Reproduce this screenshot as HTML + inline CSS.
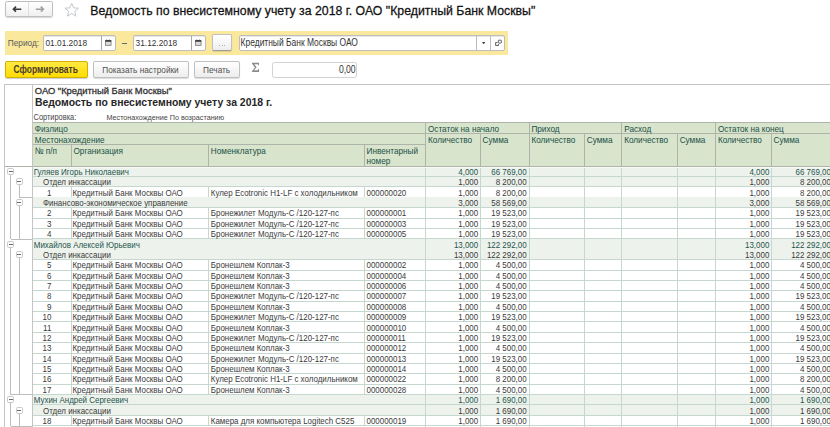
<!DOCTYPE html>
<html><head><meta charset="utf-8"><style>
html,body{margin:0;padding:0;background:#fff;}
body{width:830px;height:427px;overflow:hidden;position:relative;font-family:"Liberation Sans", sans-serif;}
.t{position:absolute;white-space:nowrap;}
.r{position:absolute;}
</style></head><body>
<div class="r" style="left:4.60px;top:1.10px;width:48.00px;height:16.00px;border:1px solid #bfbfbf;border-radius:2.2px;background:linear-gradient(#fff,#f0f0f0);box-shadow:0 1px 1px rgba(0,0,0,0.16);box-sizing:border-box"></div>
<div class="r" style="left:28.20px;top:2.10px;width:1.00px;height:14.00px;background:#dedede"></div>
<svg class="r" style="left:0;top:0" width="60" height="20" viewBox="0 0 60 20"><path d="M12.3 9.2 L15.4 6.1 L16.6 7.3 L15.3 8.4 H21.3 V10.0 H15.3 L16.6 11.1 L15.4 12.3 Z" fill="#3a3a3a"/><path d="M44.5 9.2 L41.4 6.1 L40.2 7.3 L41.5 8.4 H35.8 V10.0 H41.5 L40.2 11.1 L41.4 12.3 Z" fill="#a0a0a0"/></svg>
<svg class="r" style="left:0;top:0" width="90" height="20"><polygon points="71.70,3.30 73.58,7.81 78.45,8.21 74.74,11.39 75.87,16.14 71.70,13.60 67.53,16.14 68.66,11.39 64.95,8.21 69.82,7.81" fill="none" stroke="#c3c7cb" stroke-width="1" stroke-linejoin="round"/></svg>
<div class="t" style="left:90.30px;top:4.59px;font-size:12.3px;line-height:12.3px;color:#111;font-weight:normal;-webkit-text-stroke:0.25px #111;transform:scaleY(1.02);transform-origin:0 10.412px;">Ведомость по внесистемному учету за 2018 г. ОАО "Кредитный Банк Москвы"</div>
<div class="r" style="left:4.50px;top:31.10px;width:503.50px;height:23.60px;background:#fae99c"></div>
<div class="t" style="left:7.70px;top:38.97px;font-size:8.3px;line-height:8.3px;color:#5c5c5c;font-weight:normal;transform:scaleY(1.2);transform-origin:0 7.026px;">Период:</div>
<div class="r" style="left:43.30px;top:35.30px;width:72.40px;height:15.70px;background:#fff;border:1px solid #bdbdbd;border-radius:2px;box-sizing:border-box;box-shadow:inset 0 1px 0 #e8e8e8"></div>
<div class="r" style="left:101.00px;top:35.80px;width:1.00px;height:14.70px;background:#a8a8a8"></div>
<div class="t" style="left:45.50px;top:38.87px;font-size:8.3px;line-height:8.3px;color:#333;font-weight:normal;transform:scaleY(1.2);transform-origin:0 7.026px;">01.01.2018</div>
<svg class="r" style="left:104.9px;top:39.3px" width="7" height="7" viewBox="0 0 7 7"><rect x="0.55" y="2.2" width="5.5" height="4.1" fill="#dadada" stroke="#666" stroke-width="0.7"/><rect x="0.2" y="1.0" width="6.1" height="1.6" fill="#3c3c3c"/><rect x="1.4" y="0.2" width="0.8" height="1" fill="#888"/><rect x="4.3" y="0.2" width="0.8" height="1" fill="#888"/></svg>
<div class="r" style="left:122.20px;top:43.35px;width:4.80px;height:0.90px;background:#6a6a6a"></div>
<div class="r" style="left:133.40px;top:35.30px;width:72.30px;height:15.70px;background:#fff;border:1px solid #bdbdbd;border-radius:2px;box-sizing:border-box;box-shadow:inset 0 1px 0 #e8e8e8"></div>
<div class="r" style="left:191.20px;top:35.80px;width:1.00px;height:14.70px;background:#a8a8a8"></div>
<div class="t" style="left:135.60px;top:38.87px;font-size:8.3px;line-height:8.3px;color:#333;font-weight:normal;transform:scaleY(1.2);transform-origin:0 7.026px;">31.12.2018</div>
<svg class="r" style="left:195.0px;top:39.3px" width="7" height="7" viewBox="0 0 7 7"><rect x="0.55" y="2.2" width="5.5" height="4.1" fill="#dadada" stroke="#666" stroke-width="0.7"/><rect x="0.2" y="1.0" width="6.1" height="1.6" fill="#3c3c3c"/><rect x="1.4" y="0.2" width="0.8" height="1" fill="#888"/><rect x="4.3" y="0.2" width="0.8" height="1" fill="#888"/></svg>
<div class="r" style="left:212.40px;top:34.40px;width:19.70px;height:17.00px;background:linear-gradient(#fff,#eeeeee);border:1px solid #c0c0c0;border-bottom-color:#9c9c9c;border-radius:2px;box-sizing:border-box;box-shadow:0 1px 1px rgba(0,0,0,0.12)"></div>
<div class="r" style="left:219.40px;top:45.00px;width:0.80px;height:0.80px;background:#b0b0b0"></div>
<div class="r" style="left:221.50px;top:45.00px;width:0.80px;height:0.80px;background:#b0b0b0"></div>
<div class="r" style="left:223.60px;top:45.00px;width:0.80px;height:0.80px;background:#b0b0b0"></div>
<div class="r" style="left:238.50px;top:35.30px;width:266.30px;height:15.70px;background:#fff;border:1px solid #bdbdbd;border-radius:2px;box-sizing:border-box;box-shadow:inset 0 1px 0 #e8e8e8"></div>
<div class="r" style="left:476.30px;top:35.80px;width:1.00px;height:14.70px;background:#bdbdbd"></div>
<div class="r" style="left:490.00px;top:35.80px;width:1.00px;height:14.70px;background:#bdbdbd"></div>
<div class="t" style="left:240.60px;top:38.75px;font-size:8.45px;line-height:8.45px;color:#333;font-weight:normal;transform:scaleY(1.2);transform-origin:0 7.153px;">Кредитный Банк Москвы ОАО</div>
<svg class="r" style="left:481.9px;top:41.8px" width="4" height="3" viewBox="0 0 4 3"><path d="M0 0 L3.4 0 L1.7 2.2 Z" fill="#3a3a3a"/></svg>
<svg class="r" style="left:494.6px;top:39.2px" width="7" height="7" viewBox="0 0 7 7"><rect x="3.3" y="1.2" width="3.0" height="2.9" rx="0.5" fill="none" stroke="#444" stroke-width="0.85"/><path d="M2.4 3.6 H0.6 V6.5 H3.4 V5.0" fill="none" stroke="#444" stroke-width="0.85"/></svg>
<div class="r" style="left:4.80px;top:61.00px;width:82.90px;height:16.80px;background:linear-gradient(#ffea45,#ffdc00);border:1px solid #d2b000;border-radius:2px;box-sizing:border-box;box-shadow:0 1px 1px rgba(0,0,0,0.2)"></div>
<div class="t" style="left:13.60px;top:65.85px;font-size:8.45px;line-height:8.45px;color:#4a3c2c;font-weight:bold;transform:scaleY(1.2);transform-origin:0 7.153px;">Сформировать</div>
<div class="r" style="left:93.30px;top:61.10px;width:95.50px;height:16.70px;background:linear-gradient(#fff,#ededed);border:1px solid #c0c0c0;border-radius:2px;box-sizing:border-box;box-shadow:0 1px 1px rgba(0,0,0,0.15)"></div>
<div class="t" style="left:102.30px;top:67.02px;font-size:8.25px;line-height:8.25px;color:#505050;font-weight:normal;transform:scaleY(1.2);transform-origin:0 6.984px;">Показать настройки</div>
<div class="r" style="left:194.00px;top:61.10px;width:45.90px;height:16.70px;background:linear-gradient(#fff,#ededed);border:1px solid #c0c0c0;border-radius:2px;box-sizing:border-box;box-shadow:0 1px 1px rgba(0,0,0,0.15)"></div>
<div class="t" style="left:203.10px;top:67.02px;font-size:8.25px;line-height:8.25px;color:#505050;font-weight:normal;transform:scaleY(1.2);transform-origin:0 6.984px;">Печать</div>
<svg class="r" style="left:251px;top:62px" width="10" height="11" viewBox="0 0 10 11"><path d="M0.9 0.8 H8.05 V3.2 H7.3 L6.9 2.3 H3.3 L5.6 5.3 L3.0 8.3 H6.9 L7.3 7.0 H8.05 V10.0 H0.9 V9.2 L3.9 5.4 L0.9 1.6 Z" fill="#8c8c8c"/></svg>
<div class="r" style="left:272.40px;top:61.60px;width:84.30px;height:16.00px;background:#fff;border:1px solid #d2d2d2;border-radius:2.5px;box-sizing:border-box"></div>
<div class="t" style="right:474.40px;top:65.92px;font-size:8.6px;line-height:8.6px;color:#333;font-weight:normal;transform:scaleY(1.2);transform-origin:0 7.280px;">0,00</div>
<div class="r" style="left:4.80px;top:83.90px;width:825.20px;height:1.00px;background:#c4c4c4"></div>
<div class="r" style="left:4.30px;top:84.40px;width:1.00px;height:342.60px;background:#c4c4c4"></div>
<div class="r" style="left:31.50px;top:84.40px;width:1.00px;height:342.60px;background:#c4c4c4"></div>
<div class="t" style="left:34.80px;top:86.34px;font-size:9.4px;line-height:9.4px;color:#333;font-weight:normal;-webkit-text-stroke:0.3px #333;transform:scaleY(1.04);transform-origin:0 7.957px;">ОАО "Кредитный Банк Москвы"</div>
<div class="t" style="left:34.90px;top:98.05px;font-size:10.45px;line-height:10.45px;color:#262626;font-weight:bold;">Ведомость по внесистемному учету за 2018 г.</div>
<div class="t" style="left:33.60px;top:113.74px;font-size:7.4px;line-height:7.4px;color:#464646;font-weight:normal;transform:scaleY(1.12);transform-origin:0 6.264px;">Сортировка:</div>
<div class="t" style="left:106.50px;top:113.91px;font-size:7.2px;line-height:7.2px;color:#464646;font-weight:normal;transform:scaleY(1.12);transform-origin:0 6.095px;">Местонахождение По возрастанию</div>
<div class="r" style="left:32.00px;top:122.90px;width:798.00px;height:43.30px;background:#d8e4cb"></div>
<div class="r" style="left:32.00px;top:122.40px;width:798.00px;height:1.00px;background:#afb4ab"></div>
<div class="r" style="left:32.00px;top:133.30px;width:798.00px;height:1.00px;background:#afb4ab"></div>
<div class="r" style="left:32.00px;top:144.30px;width:393.60px;height:1.00px;background:#afb4ab"></div>
<div class="r" style="left:32.00px;top:165.70px;width:798.00px;height:1.00px;background:#afb4ab"></div>
<div class="r" style="left:70.50px;top:144.80px;width:1.00px;height:21.40px;background:#afb4ab"></div>
<div class="r" style="left:208.00px;top:144.80px;width:1.00px;height:21.40px;background:#afb4ab"></div>
<div class="r" style="left:363.60px;top:144.80px;width:1.00px;height:21.40px;background:#afb4ab"></div>
<div class="r" style="left:425.10px;top:122.90px;width:1.00px;height:43.30px;background:#afb4ab"></div>
<div class="r" style="left:479.90px;top:133.80px;width:1.00px;height:32.40px;background:#afb4ab"></div>
<div class="r" style="left:584.10px;top:133.80px;width:1.00px;height:32.40px;background:#afb4ab"></div>
<div class="r" style="left:677.00px;top:133.80px;width:1.00px;height:32.40px;background:#afb4ab"></div>
<div class="r" style="left:770.90px;top:133.80px;width:1.00px;height:32.40px;background:#afb4ab"></div>
<div class="r" style="left:528.50px;top:122.90px;width:1.00px;height:43.30px;background:#afb4ab"></div>
<div class="r" style="left:621.30px;top:122.90px;width:1.00px;height:43.30px;background:#afb4ab"></div>
<div class="r" style="left:715.00px;top:122.90px;width:1.00px;height:43.30px;background:#afb4ab"></div>
<div class="t" style="left:34.80px;top:126.26px;font-size:8.2px;line-height:8.2px;color:#1b5049;font-weight:normal;transform:scaleY(1.15);transform-origin:0 6.941px;">Физлицо</div>
<div class="t" style="left:34.80px;top:136.96px;font-size:8.2px;line-height:8.2px;color:#1b5049;font-weight:normal;transform:scaleY(1.15);transform-origin:0 6.941px;">Местонахождение</div>
<div class="t" style="left:34.80px;top:147.96px;font-size:8.2px;line-height:8.2px;color:#1b5049;font-weight:normal;transform:scaleY(1.15);transform-origin:0 6.941px;">№ п/п</div>
<div class="t" style="left:73.50px;top:147.96px;font-size:8.2px;line-height:8.2px;color:#1b5049;font-weight:normal;transform:scaleY(1.15);transform-origin:0 6.941px;">Организация</div>
<div class="t" style="left:210.80px;top:147.96px;font-size:8.2px;line-height:8.2px;color:#1b5049;font-weight:normal;transform:scaleY(1.15);transform-origin:0 6.941px;">Номенклатура</div>
<div class="t" style="left:366.50px;top:147.96px;font-size:8.2px;line-height:8.2px;color:#1b5049;font-weight:normal;transform:scaleY(1.15);transform-origin:0 6.941px;">Инвентарный</div>
<div class="t" style="left:366.50px;top:157.56px;font-size:8.2px;line-height:8.2px;color:#1b5049;font-weight:normal;transform:scaleY(1.15);transform-origin:0 6.941px;">номер</div>
<div class="t" style="left:428.00px;top:126.26px;font-size:8.2px;line-height:8.2px;color:#1b5049;font-weight:normal;transform:scaleY(1.15);transform-origin:0 6.941px;">Остаток на начало</div>
<div class="t" style="left:531.40px;top:126.26px;font-size:8.2px;line-height:8.2px;color:#1b5049;font-weight:normal;transform:scaleY(1.15);transform-origin:0 6.941px;">Приход</div>
<div class="t" style="left:624.20px;top:126.26px;font-size:8.2px;line-height:8.2px;color:#1b5049;font-weight:normal;transform:scaleY(1.15);transform-origin:0 6.941px;">Расход</div>
<div class="t" style="left:717.90px;top:126.26px;font-size:8.2px;line-height:8.2px;color:#1b5049;font-weight:normal;transform:scaleY(1.15);transform-origin:0 6.941px;">Остаток на конец</div>
<div class="t" style="left:428.00px;top:136.96px;font-size:8.2px;line-height:8.2px;color:#1b5049;font-weight:normal;transform:scaleY(1.15);transform-origin:0 6.941px;">Количество</div>
<div class="t" style="left:531.40px;top:136.96px;font-size:8.2px;line-height:8.2px;color:#1b5049;font-weight:normal;transform:scaleY(1.15);transform-origin:0 6.941px;">Количество</div>
<div class="t" style="left:624.20px;top:136.96px;font-size:8.2px;line-height:8.2px;color:#1b5049;font-weight:normal;transform:scaleY(1.15);transform-origin:0 6.941px;">Количество</div>
<div class="t" style="left:717.90px;top:136.96px;font-size:8.2px;line-height:8.2px;color:#1b5049;font-weight:normal;transform:scaleY(1.15);transform-origin:0 6.941px;">Количество</div>
<div class="t" style="left:482.60px;top:136.96px;font-size:8.2px;line-height:8.2px;color:#1b5049;font-weight:normal;transform:scaleY(1.15);transform-origin:0 6.941px;">Сумма</div>
<div class="t" style="left:586.80px;top:136.96px;font-size:8.2px;line-height:8.2px;color:#1b5049;font-weight:normal;transform:scaleY(1.15);transform-origin:0 6.941px;">Сумма</div>
<div class="t" style="left:679.70px;top:136.96px;font-size:8.2px;line-height:8.2px;color:#1b5049;font-weight:normal;transform:scaleY(1.15);transform-origin:0 6.941px;">Сумма</div>
<div class="t" style="left:773.60px;top:136.96px;font-size:8.2px;line-height:8.2px;color:#1b5049;font-weight:normal;transform:scaleY(1.15);transform-origin:0 6.941px;">Сумма</div>
<div class="r" style="left:32.00px;top:166.20px;width:798.00px;height:10.38px;background:#eef2ec"></div>
<div class="r" style="left:32.00px;top:176.08px;width:798.00px;height:1.00px;background:#c6d7cf"></div>
<div class="r" style="left:32.00px;top:176.58px;width:798.00px;height:10.38px;background:#eef2ec"></div>
<div class="r" style="left:32.00px;top:186.46px;width:798.00px;height:1.00px;background:#c6d7cf"></div>
<div class="r" style="left:32.00px;top:196.84px;width:798.00px;height:1.00px;background:#c6d7cf"></div>
<div class="r" style="left:70.50px;top:186.96px;width:1.00px;height:10.38px;background:#c6d7cf"></div>
<div class="r" style="left:208.00px;top:186.96px;width:1.00px;height:10.38px;background:#c6d7cf"></div>
<div class="r" style="left:363.60px;top:186.96px;width:1.00px;height:10.38px;background:#c6d7cf"></div>
<div class="r" style="left:32.00px;top:197.34px;width:798.00px;height:10.38px;background:#eef2ec"></div>
<div class="r" style="left:32.00px;top:207.22px;width:798.00px;height:1.00px;background:#c6d7cf"></div>
<div class="r" style="left:32.00px;top:217.60px;width:798.00px;height:1.00px;background:#c6d7cf"></div>
<div class="r" style="left:70.50px;top:207.72px;width:1.00px;height:10.38px;background:#c6d7cf"></div>
<div class="r" style="left:208.00px;top:207.72px;width:1.00px;height:10.38px;background:#c6d7cf"></div>
<div class="r" style="left:363.60px;top:207.72px;width:1.00px;height:10.38px;background:#c6d7cf"></div>
<div class="r" style="left:32.00px;top:227.98px;width:798.00px;height:1.00px;background:#c6d7cf"></div>
<div class="r" style="left:70.50px;top:218.10px;width:1.00px;height:10.38px;background:#c6d7cf"></div>
<div class="r" style="left:208.00px;top:218.10px;width:1.00px;height:10.38px;background:#c6d7cf"></div>
<div class="r" style="left:363.60px;top:218.10px;width:1.00px;height:10.38px;background:#c6d7cf"></div>
<div class="r" style="left:32.00px;top:238.36px;width:798.00px;height:1.00px;background:#c6d7cf"></div>
<div class="r" style="left:70.50px;top:228.48px;width:1.00px;height:10.38px;background:#c6d7cf"></div>
<div class="r" style="left:208.00px;top:228.48px;width:1.00px;height:10.38px;background:#c6d7cf"></div>
<div class="r" style="left:363.60px;top:228.48px;width:1.00px;height:10.38px;background:#c6d7cf"></div>
<div class="r" style="left:32.00px;top:238.86px;width:798.00px;height:10.38px;background:#eef2ec"></div>
<div class="r" style="left:32.00px;top:248.74px;width:798.00px;height:1.00px;background:#c6d7cf"></div>
<div class="r" style="left:32.00px;top:249.24px;width:798.00px;height:10.38px;background:#eef2ec"></div>
<div class="r" style="left:32.00px;top:259.12px;width:798.00px;height:1.00px;background:#c6d7cf"></div>
<div class="r" style="left:32.00px;top:269.50px;width:798.00px;height:1.00px;background:#c6d7cf"></div>
<div class="r" style="left:70.50px;top:259.62px;width:1.00px;height:10.38px;background:#c6d7cf"></div>
<div class="r" style="left:208.00px;top:259.62px;width:1.00px;height:10.38px;background:#c6d7cf"></div>
<div class="r" style="left:363.60px;top:259.62px;width:1.00px;height:10.38px;background:#c6d7cf"></div>
<div class="r" style="left:32.00px;top:279.88px;width:798.00px;height:1.00px;background:#c6d7cf"></div>
<div class="r" style="left:70.50px;top:270.00px;width:1.00px;height:10.38px;background:#c6d7cf"></div>
<div class="r" style="left:208.00px;top:270.00px;width:1.00px;height:10.38px;background:#c6d7cf"></div>
<div class="r" style="left:363.60px;top:270.00px;width:1.00px;height:10.38px;background:#c6d7cf"></div>
<div class="r" style="left:32.00px;top:290.26px;width:798.00px;height:1.00px;background:#c6d7cf"></div>
<div class="r" style="left:70.50px;top:280.38px;width:1.00px;height:10.38px;background:#c6d7cf"></div>
<div class="r" style="left:208.00px;top:280.38px;width:1.00px;height:10.38px;background:#c6d7cf"></div>
<div class="r" style="left:363.60px;top:280.38px;width:1.00px;height:10.38px;background:#c6d7cf"></div>
<div class="r" style="left:32.00px;top:300.64px;width:798.00px;height:1.00px;background:#c6d7cf"></div>
<div class="r" style="left:70.50px;top:290.76px;width:1.00px;height:10.38px;background:#c6d7cf"></div>
<div class="r" style="left:208.00px;top:290.76px;width:1.00px;height:10.38px;background:#c6d7cf"></div>
<div class="r" style="left:363.60px;top:290.76px;width:1.00px;height:10.38px;background:#c6d7cf"></div>
<div class="r" style="left:32.00px;top:311.02px;width:798.00px;height:1.00px;background:#c6d7cf"></div>
<div class="r" style="left:70.50px;top:301.14px;width:1.00px;height:10.38px;background:#c6d7cf"></div>
<div class="r" style="left:208.00px;top:301.14px;width:1.00px;height:10.38px;background:#c6d7cf"></div>
<div class="r" style="left:363.60px;top:301.14px;width:1.00px;height:10.38px;background:#c6d7cf"></div>
<div class="r" style="left:32.00px;top:321.40px;width:798.00px;height:1.00px;background:#c6d7cf"></div>
<div class="r" style="left:70.50px;top:311.52px;width:1.00px;height:10.38px;background:#c6d7cf"></div>
<div class="r" style="left:208.00px;top:311.52px;width:1.00px;height:10.38px;background:#c6d7cf"></div>
<div class="r" style="left:363.60px;top:311.52px;width:1.00px;height:10.38px;background:#c6d7cf"></div>
<div class="r" style="left:32.00px;top:331.78px;width:798.00px;height:1.00px;background:#c6d7cf"></div>
<div class="r" style="left:70.50px;top:321.90px;width:1.00px;height:10.38px;background:#c6d7cf"></div>
<div class="r" style="left:208.00px;top:321.90px;width:1.00px;height:10.38px;background:#c6d7cf"></div>
<div class="r" style="left:363.60px;top:321.90px;width:1.00px;height:10.38px;background:#c6d7cf"></div>
<div class="r" style="left:32.00px;top:342.16px;width:798.00px;height:1.00px;background:#c6d7cf"></div>
<div class="r" style="left:70.50px;top:332.28px;width:1.00px;height:10.38px;background:#c6d7cf"></div>
<div class="r" style="left:208.00px;top:332.28px;width:1.00px;height:10.38px;background:#c6d7cf"></div>
<div class="r" style="left:363.60px;top:332.28px;width:1.00px;height:10.38px;background:#c6d7cf"></div>
<div class="r" style="left:32.00px;top:352.54px;width:798.00px;height:1.00px;background:#c6d7cf"></div>
<div class="r" style="left:70.50px;top:342.66px;width:1.00px;height:10.38px;background:#c6d7cf"></div>
<div class="r" style="left:208.00px;top:342.66px;width:1.00px;height:10.38px;background:#c6d7cf"></div>
<div class="r" style="left:363.60px;top:342.66px;width:1.00px;height:10.38px;background:#c6d7cf"></div>
<div class="r" style="left:32.00px;top:362.92px;width:798.00px;height:1.00px;background:#c6d7cf"></div>
<div class="r" style="left:70.50px;top:353.04px;width:1.00px;height:10.38px;background:#c6d7cf"></div>
<div class="r" style="left:208.00px;top:353.04px;width:1.00px;height:10.38px;background:#c6d7cf"></div>
<div class="r" style="left:363.60px;top:353.04px;width:1.00px;height:10.38px;background:#c6d7cf"></div>
<div class="r" style="left:32.00px;top:373.30px;width:798.00px;height:1.00px;background:#c6d7cf"></div>
<div class="r" style="left:70.50px;top:363.42px;width:1.00px;height:10.38px;background:#c6d7cf"></div>
<div class="r" style="left:208.00px;top:363.42px;width:1.00px;height:10.38px;background:#c6d7cf"></div>
<div class="r" style="left:363.60px;top:363.42px;width:1.00px;height:10.38px;background:#c6d7cf"></div>
<div class="r" style="left:32.00px;top:383.68px;width:798.00px;height:1.00px;background:#c6d7cf"></div>
<div class="r" style="left:70.50px;top:373.80px;width:1.00px;height:10.38px;background:#c6d7cf"></div>
<div class="r" style="left:208.00px;top:373.80px;width:1.00px;height:10.38px;background:#c6d7cf"></div>
<div class="r" style="left:363.60px;top:373.80px;width:1.00px;height:10.38px;background:#c6d7cf"></div>
<div class="r" style="left:32.00px;top:394.06px;width:798.00px;height:1.00px;background:#c6d7cf"></div>
<div class="r" style="left:70.50px;top:384.18px;width:1.00px;height:10.38px;background:#c6d7cf"></div>
<div class="r" style="left:208.00px;top:384.18px;width:1.00px;height:10.38px;background:#c6d7cf"></div>
<div class="r" style="left:363.60px;top:384.18px;width:1.00px;height:10.38px;background:#c6d7cf"></div>
<div class="r" style="left:32.00px;top:394.56px;width:798.00px;height:10.38px;background:#eef2ec"></div>
<div class="r" style="left:32.00px;top:404.44px;width:798.00px;height:1.00px;background:#c6d7cf"></div>
<div class="r" style="left:32.00px;top:404.94px;width:798.00px;height:10.38px;background:#eef2ec"></div>
<div class="r" style="left:32.00px;top:414.82px;width:798.00px;height:1.00px;background:#c6d7cf"></div>
<div class="r" style="left:32.00px;top:425.20px;width:798.00px;height:1.00px;background:#c6d7cf"></div>
<div class="r" style="left:70.50px;top:415.32px;width:1.00px;height:10.38px;background:#c6d7cf"></div>
<div class="r" style="left:208.00px;top:415.32px;width:1.00px;height:10.38px;background:#c6d7cf"></div>
<div class="r" style="left:363.60px;top:415.32px;width:1.00px;height:10.38px;background:#c6d7cf"></div>
<div class="r" style="left:425.10px;top:166.20px;width:1.00px;height:260.80px;background:#c6d7cf"></div>
<div class="r" style="left:479.90px;top:166.20px;width:1.00px;height:260.80px;background:#c6d7cf"></div>
<div class="r" style="left:528.50px;top:166.20px;width:1.00px;height:260.80px;background:#c6d7cf"></div>
<div class="r" style="left:584.10px;top:166.20px;width:1.00px;height:260.80px;background:#c6d7cf"></div>
<div class="r" style="left:621.30px;top:166.20px;width:1.00px;height:260.80px;background:#c6d7cf"></div>
<div class="r" style="left:677.00px;top:166.20px;width:1.00px;height:260.80px;background:#c6d7cf"></div>
<div class="r" style="left:715.00px;top:166.20px;width:1.00px;height:260.80px;background:#c6d7cf"></div>
<div class="r" style="left:770.90px;top:166.20px;width:1.00px;height:260.80px;background:#c6d7cf"></div>
<div class="r" style="left:32.00px;top:166.60px;width:798.00px;height:1.00px;background:#f6f9f5"></div>
<div class="r" style="left:32.00px;top:165.70px;width:798.00px;height:1.00px;background:#afb4ab"></div>
<div class="t" style="left:33.80px;top:168.87px;font-size:7.95px;line-height:7.95px;color:#1d554c;font-weight:normal;transform:scaleY(1.25);transform-origin:0 6.730px;">Гуляев Игорь Николаевич</div>
<div class="t" style="right:351.80px;top:168.87px;font-size:7.95px;line-height:7.95px;color:#1d554c;font-weight:normal;transform:scaleY(1.25);transform-origin:0 6.730px;">4,000</div>
<div class="t" style="right:303.40px;top:168.87px;font-size:7.95px;line-height:7.95px;color:#1d554c;font-weight:normal;transform:scaleY(1.25);transform-origin:0 6.730px;">66 769,00</div>
<div class="t" style="right:60.70px;top:168.87px;font-size:7.95px;line-height:7.95px;color:#1d554c;font-weight:normal;transform:scaleY(1.25);transform-origin:0 6.730px;">4,000</div>
<div class="t" style="right:-0.90px;top:168.87px;font-size:7.95px;line-height:7.95px;color:#1d554c;font-weight:normal;transform:scaleY(1.25);transform-origin:0 6.730px;">66 769,00</div>
<div class="t" style="left:43.00px;top:179.25px;font-size:7.95px;line-height:7.95px;color:#3a3a3a;font-weight:normal;transform:scaleY(1.25);transform-origin:0 6.730px;">Отдел инкассации</div>
<div class="t" style="right:351.80px;top:179.25px;font-size:7.95px;line-height:7.95px;color:#3a3a3a;font-weight:normal;transform:scaleY(1.25);transform-origin:0 6.730px;">1,000</div>
<div class="t" style="right:303.40px;top:179.25px;font-size:7.95px;line-height:7.95px;color:#3a3a3a;font-weight:normal;transform:scaleY(1.25);transform-origin:0 6.730px;">8 200,00</div>
<div class="t" style="right:60.70px;top:179.25px;font-size:7.95px;line-height:7.95px;color:#3a3a3a;font-weight:normal;transform:scaleY(1.25);transform-origin:0 6.730px;">1,000</div>
<div class="t" style="right:-0.90px;top:179.25px;font-size:7.95px;line-height:7.95px;color:#3a3a3a;font-weight:normal;transform:scaleY(1.25);transform-origin:0 6.730px;">8 200,00</div>
<div class="t" style="right:778.70px;top:189.63px;font-size:7.95px;line-height:7.95px;color:#3a3a3a;font-weight:normal;transform:scaleY(1.25);transform-origin:0 6.730px;">1</div>
<div class="t" style="left:72.40px;top:189.63px;font-size:7.95px;line-height:7.95px;color:#3a3a3a;font-weight:normal;transform:scaleY(1.25);transform-origin:0 6.730px;">Кредитный Банк Москвы ОАО</div>
<div class="t" style="left:210.80px;top:189.63px;font-size:7.95px;line-height:7.95px;color:#3a3a3a;font-weight:normal;transform:scaleY(1.25);transform-origin:0 6.730px;">Кулер Ecotronic H1-LF с холодильником</div>
<div class="t" style="left:366.50px;top:189.63px;font-size:7.95px;line-height:7.95px;color:#3a3a3a;font-weight:normal;transform:scaleY(1.25);transform-origin:0 6.730px;">000000020</div>
<div class="t" style="right:351.80px;top:189.63px;font-size:7.95px;line-height:7.95px;color:#3a3a3a;font-weight:normal;transform:scaleY(1.25);transform-origin:0 6.730px;">1,000</div>
<div class="t" style="right:303.40px;top:189.63px;font-size:7.95px;line-height:7.95px;color:#3a3a3a;font-weight:normal;transform:scaleY(1.25);transform-origin:0 6.730px;">8 200,00</div>
<div class="t" style="right:60.70px;top:189.63px;font-size:7.95px;line-height:7.95px;color:#3a3a3a;font-weight:normal;transform:scaleY(1.25);transform-origin:0 6.730px;">1,000</div>
<div class="t" style="right:-0.90px;top:189.63px;font-size:7.95px;line-height:7.95px;color:#3a3a3a;font-weight:normal;transform:scaleY(1.25);transform-origin:0 6.730px;">8 200,00</div>
<div class="t" style="left:43.00px;top:200.01px;font-size:7.95px;line-height:7.95px;color:#3a3a3a;font-weight:normal;transform:scaleY(1.25);transform-origin:0 6.730px;">Финансово-экономическое управление</div>
<div class="t" style="right:351.80px;top:200.01px;font-size:7.95px;line-height:7.95px;color:#3a3a3a;font-weight:normal;transform:scaleY(1.25);transform-origin:0 6.730px;">3,000</div>
<div class="t" style="right:303.40px;top:200.01px;font-size:7.95px;line-height:7.95px;color:#3a3a3a;font-weight:normal;transform:scaleY(1.25);transform-origin:0 6.730px;">58 569,00</div>
<div class="t" style="right:60.70px;top:200.01px;font-size:7.95px;line-height:7.95px;color:#3a3a3a;font-weight:normal;transform:scaleY(1.25);transform-origin:0 6.730px;">3,000</div>
<div class="t" style="right:-0.90px;top:200.01px;font-size:7.95px;line-height:7.95px;color:#3a3a3a;font-weight:normal;transform:scaleY(1.25);transform-origin:0 6.730px;">58 569,00</div>
<div class="t" style="right:778.70px;top:210.39px;font-size:7.95px;line-height:7.95px;color:#3a3a3a;font-weight:normal;transform:scaleY(1.25);transform-origin:0 6.730px;">2</div>
<div class="t" style="left:72.40px;top:210.39px;font-size:7.95px;line-height:7.95px;color:#3a3a3a;font-weight:normal;transform:scaleY(1.25);transform-origin:0 6.730px;">Кредитный Банк Москвы ОАО</div>
<div class="t" style="left:210.80px;top:210.39px;font-size:7.95px;line-height:7.95px;color:#3a3a3a;font-weight:normal;transform:scaleY(1.25);transform-origin:0 6.730px;">Бронежилет Модуль-С /120-127-пс</div>
<div class="t" style="left:366.50px;top:210.39px;font-size:7.95px;line-height:7.95px;color:#3a3a3a;font-weight:normal;transform:scaleY(1.25);transform-origin:0 6.730px;">000000001</div>
<div class="t" style="right:351.80px;top:210.39px;font-size:7.95px;line-height:7.95px;color:#3a3a3a;font-weight:normal;transform:scaleY(1.25);transform-origin:0 6.730px;">1,000</div>
<div class="t" style="right:303.40px;top:210.39px;font-size:7.95px;line-height:7.95px;color:#3a3a3a;font-weight:normal;transform:scaleY(1.25);transform-origin:0 6.730px;">19 523,00</div>
<div class="t" style="right:60.70px;top:210.39px;font-size:7.95px;line-height:7.95px;color:#3a3a3a;font-weight:normal;transform:scaleY(1.25);transform-origin:0 6.730px;">1,000</div>
<div class="t" style="right:-0.90px;top:210.39px;font-size:7.95px;line-height:7.95px;color:#3a3a3a;font-weight:normal;transform:scaleY(1.25);transform-origin:0 6.730px;">19 523,00</div>
<div class="t" style="right:778.70px;top:220.77px;font-size:7.95px;line-height:7.95px;color:#3a3a3a;font-weight:normal;transform:scaleY(1.25);transform-origin:0 6.730px;">3</div>
<div class="t" style="left:72.40px;top:220.77px;font-size:7.95px;line-height:7.95px;color:#3a3a3a;font-weight:normal;transform:scaleY(1.25);transform-origin:0 6.730px;">Кредитный Банк Москвы ОАО</div>
<div class="t" style="left:210.80px;top:220.77px;font-size:7.95px;line-height:7.95px;color:#3a3a3a;font-weight:normal;transform:scaleY(1.25);transform-origin:0 6.730px;">Бронежилет Модуль-С /120-127-пс</div>
<div class="t" style="left:366.50px;top:220.77px;font-size:7.95px;line-height:7.95px;color:#3a3a3a;font-weight:normal;transform:scaleY(1.25);transform-origin:0 6.730px;">000000003</div>
<div class="t" style="right:351.80px;top:220.77px;font-size:7.95px;line-height:7.95px;color:#3a3a3a;font-weight:normal;transform:scaleY(1.25);transform-origin:0 6.730px;">1,000</div>
<div class="t" style="right:303.40px;top:220.77px;font-size:7.95px;line-height:7.95px;color:#3a3a3a;font-weight:normal;transform:scaleY(1.25);transform-origin:0 6.730px;">19 523,00</div>
<div class="t" style="right:60.70px;top:220.77px;font-size:7.95px;line-height:7.95px;color:#3a3a3a;font-weight:normal;transform:scaleY(1.25);transform-origin:0 6.730px;">1,000</div>
<div class="t" style="right:-0.90px;top:220.77px;font-size:7.95px;line-height:7.95px;color:#3a3a3a;font-weight:normal;transform:scaleY(1.25);transform-origin:0 6.730px;">19 523,00</div>
<div class="t" style="right:778.70px;top:231.15px;font-size:7.95px;line-height:7.95px;color:#3a3a3a;font-weight:normal;transform:scaleY(1.25);transform-origin:0 6.730px;">4</div>
<div class="t" style="left:72.40px;top:231.15px;font-size:7.95px;line-height:7.95px;color:#3a3a3a;font-weight:normal;transform:scaleY(1.25);transform-origin:0 6.730px;">Кредитный Банк Москвы ОАО</div>
<div class="t" style="left:210.80px;top:231.15px;font-size:7.95px;line-height:7.95px;color:#3a3a3a;font-weight:normal;transform:scaleY(1.25);transform-origin:0 6.730px;">Бронежилет Модуль-С /120-127-пс</div>
<div class="t" style="left:366.50px;top:231.15px;font-size:7.95px;line-height:7.95px;color:#3a3a3a;font-weight:normal;transform:scaleY(1.25);transform-origin:0 6.730px;">000000005</div>
<div class="t" style="right:351.80px;top:231.15px;font-size:7.95px;line-height:7.95px;color:#3a3a3a;font-weight:normal;transform:scaleY(1.25);transform-origin:0 6.730px;">1,000</div>
<div class="t" style="right:303.40px;top:231.15px;font-size:7.95px;line-height:7.95px;color:#3a3a3a;font-weight:normal;transform:scaleY(1.25);transform-origin:0 6.730px;">19 523,00</div>
<div class="t" style="right:60.70px;top:231.15px;font-size:7.95px;line-height:7.95px;color:#3a3a3a;font-weight:normal;transform:scaleY(1.25);transform-origin:0 6.730px;">1,000</div>
<div class="t" style="right:-0.90px;top:231.15px;font-size:7.95px;line-height:7.95px;color:#3a3a3a;font-weight:normal;transform:scaleY(1.25);transform-origin:0 6.730px;">19 523,00</div>
<div class="t" style="left:33.80px;top:241.53px;font-size:7.95px;line-height:7.95px;color:#1d554c;font-weight:normal;transform:scaleY(1.25);transform-origin:0 6.730px;">Михайлов Алексей Юрьевич</div>
<div class="t" style="right:351.80px;top:241.53px;font-size:7.95px;line-height:7.95px;color:#1d554c;font-weight:normal;transform:scaleY(1.25);transform-origin:0 6.730px;">13,000</div>
<div class="t" style="right:303.40px;top:241.53px;font-size:7.95px;line-height:7.95px;color:#1d554c;font-weight:normal;transform:scaleY(1.25);transform-origin:0 6.730px;">122 292,00</div>
<div class="t" style="right:60.70px;top:241.53px;font-size:7.95px;line-height:7.95px;color:#1d554c;font-weight:normal;transform:scaleY(1.25);transform-origin:0 6.730px;">13,000</div>
<div class="t" style="right:-0.90px;top:241.53px;font-size:7.95px;line-height:7.95px;color:#1d554c;font-weight:normal;transform:scaleY(1.25);transform-origin:0 6.730px;">122 292,00</div>
<div class="t" style="left:43.00px;top:251.91px;font-size:7.95px;line-height:7.95px;color:#3a3a3a;font-weight:normal;transform:scaleY(1.25);transform-origin:0 6.730px;">Отдел инкассации</div>
<div class="t" style="right:351.80px;top:251.91px;font-size:7.95px;line-height:7.95px;color:#3a3a3a;font-weight:normal;transform:scaleY(1.25);transform-origin:0 6.730px;">13,000</div>
<div class="t" style="right:303.40px;top:251.91px;font-size:7.95px;line-height:7.95px;color:#3a3a3a;font-weight:normal;transform:scaleY(1.25);transform-origin:0 6.730px;">122 292,00</div>
<div class="t" style="right:60.70px;top:251.91px;font-size:7.95px;line-height:7.95px;color:#3a3a3a;font-weight:normal;transform:scaleY(1.25);transform-origin:0 6.730px;">13,000</div>
<div class="t" style="right:-0.90px;top:251.91px;font-size:7.95px;line-height:7.95px;color:#3a3a3a;font-weight:normal;transform:scaleY(1.25);transform-origin:0 6.730px;">122 292,00</div>
<div class="t" style="right:778.70px;top:262.29px;font-size:7.95px;line-height:7.95px;color:#3a3a3a;font-weight:normal;transform:scaleY(1.25);transform-origin:0 6.730px;">5</div>
<div class="t" style="left:72.40px;top:262.29px;font-size:7.95px;line-height:7.95px;color:#3a3a3a;font-weight:normal;transform:scaleY(1.25);transform-origin:0 6.730px;">Кредитный Банк Москвы ОАО</div>
<div class="t" style="left:210.80px;top:262.29px;font-size:7.95px;line-height:7.95px;color:#3a3a3a;font-weight:normal;transform:scaleY(1.25);transform-origin:0 6.730px;">Бронешлем Коплак-3</div>
<div class="t" style="left:366.50px;top:262.29px;font-size:7.95px;line-height:7.95px;color:#3a3a3a;font-weight:normal;transform:scaleY(1.25);transform-origin:0 6.730px;">000000002</div>
<div class="t" style="right:351.80px;top:262.29px;font-size:7.95px;line-height:7.95px;color:#3a3a3a;font-weight:normal;transform:scaleY(1.25);transform-origin:0 6.730px;">1,000</div>
<div class="t" style="right:303.40px;top:262.29px;font-size:7.95px;line-height:7.95px;color:#3a3a3a;font-weight:normal;transform:scaleY(1.25);transform-origin:0 6.730px;">4 500,00</div>
<div class="t" style="right:60.70px;top:262.29px;font-size:7.95px;line-height:7.95px;color:#3a3a3a;font-weight:normal;transform:scaleY(1.25);transform-origin:0 6.730px;">1,000</div>
<div class="t" style="right:-0.90px;top:262.29px;font-size:7.95px;line-height:7.95px;color:#3a3a3a;font-weight:normal;transform:scaleY(1.25);transform-origin:0 6.730px;">4 500,00</div>
<div class="t" style="right:778.70px;top:272.67px;font-size:7.95px;line-height:7.95px;color:#3a3a3a;font-weight:normal;transform:scaleY(1.25);transform-origin:0 6.730px;">6</div>
<div class="t" style="left:72.40px;top:272.67px;font-size:7.95px;line-height:7.95px;color:#3a3a3a;font-weight:normal;transform:scaleY(1.25);transform-origin:0 6.730px;">Кредитный Банк Москвы ОАО</div>
<div class="t" style="left:210.80px;top:272.67px;font-size:7.95px;line-height:7.95px;color:#3a3a3a;font-weight:normal;transform:scaleY(1.25);transform-origin:0 6.730px;">Бронешлем Коплак-3</div>
<div class="t" style="left:366.50px;top:272.67px;font-size:7.95px;line-height:7.95px;color:#3a3a3a;font-weight:normal;transform:scaleY(1.25);transform-origin:0 6.730px;">000000004</div>
<div class="t" style="right:351.80px;top:272.67px;font-size:7.95px;line-height:7.95px;color:#3a3a3a;font-weight:normal;transform:scaleY(1.25);transform-origin:0 6.730px;">1,000</div>
<div class="t" style="right:303.40px;top:272.67px;font-size:7.95px;line-height:7.95px;color:#3a3a3a;font-weight:normal;transform:scaleY(1.25);transform-origin:0 6.730px;">4 500,00</div>
<div class="t" style="right:60.70px;top:272.67px;font-size:7.95px;line-height:7.95px;color:#3a3a3a;font-weight:normal;transform:scaleY(1.25);transform-origin:0 6.730px;">1,000</div>
<div class="t" style="right:-0.90px;top:272.67px;font-size:7.95px;line-height:7.95px;color:#3a3a3a;font-weight:normal;transform:scaleY(1.25);transform-origin:0 6.730px;">4 500,00</div>
<div class="t" style="right:778.70px;top:283.05px;font-size:7.95px;line-height:7.95px;color:#3a3a3a;font-weight:normal;transform:scaleY(1.25);transform-origin:0 6.730px;">7</div>
<div class="t" style="left:72.40px;top:283.05px;font-size:7.95px;line-height:7.95px;color:#3a3a3a;font-weight:normal;transform:scaleY(1.25);transform-origin:0 6.730px;">Кредитный Банк Москвы ОАО</div>
<div class="t" style="left:210.80px;top:283.05px;font-size:7.95px;line-height:7.95px;color:#3a3a3a;font-weight:normal;transform:scaleY(1.25);transform-origin:0 6.730px;">Бронешлем Коплак-3</div>
<div class="t" style="left:366.50px;top:283.05px;font-size:7.95px;line-height:7.95px;color:#3a3a3a;font-weight:normal;transform:scaleY(1.25);transform-origin:0 6.730px;">000000006</div>
<div class="t" style="right:351.80px;top:283.05px;font-size:7.95px;line-height:7.95px;color:#3a3a3a;font-weight:normal;transform:scaleY(1.25);transform-origin:0 6.730px;">1,000</div>
<div class="t" style="right:303.40px;top:283.05px;font-size:7.95px;line-height:7.95px;color:#3a3a3a;font-weight:normal;transform:scaleY(1.25);transform-origin:0 6.730px;">4 500,00</div>
<div class="t" style="right:60.70px;top:283.05px;font-size:7.95px;line-height:7.95px;color:#3a3a3a;font-weight:normal;transform:scaleY(1.25);transform-origin:0 6.730px;">1,000</div>
<div class="t" style="right:-0.90px;top:283.05px;font-size:7.95px;line-height:7.95px;color:#3a3a3a;font-weight:normal;transform:scaleY(1.25);transform-origin:0 6.730px;">4 500,00</div>
<div class="t" style="right:778.70px;top:293.43px;font-size:7.95px;line-height:7.95px;color:#3a3a3a;font-weight:normal;transform:scaleY(1.25);transform-origin:0 6.730px;">8</div>
<div class="t" style="left:72.40px;top:293.43px;font-size:7.95px;line-height:7.95px;color:#3a3a3a;font-weight:normal;transform:scaleY(1.25);transform-origin:0 6.730px;">Кредитный Банк Москвы ОАО</div>
<div class="t" style="left:210.80px;top:293.43px;font-size:7.95px;line-height:7.95px;color:#3a3a3a;font-weight:normal;transform:scaleY(1.25);transform-origin:0 6.730px;">Бронежилет Модуль-С /120-127-пс</div>
<div class="t" style="left:366.50px;top:293.43px;font-size:7.95px;line-height:7.95px;color:#3a3a3a;font-weight:normal;transform:scaleY(1.25);transform-origin:0 6.730px;">000000007</div>
<div class="t" style="right:351.80px;top:293.43px;font-size:7.95px;line-height:7.95px;color:#3a3a3a;font-weight:normal;transform:scaleY(1.25);transform-origin:0 6.730px;">1,000</div>
<div class="t" style="right:303.40px;top:293.43px;font-size:7.95px;line-height:7.95px;color:#3a3a3a;font-weight:normal;transform:scaleY(1.25);transform-origin:0 6.730px;">19 523,00</div>
<div class="t" style="right:60.70px;top:293.43px;font-size:7.95px;line-height:7.95px;color:#3a3a3a;font-weight:normal;transform:scaleY(1.25);transform-origin:0 6.730px;">1,000</div>
<div class="t" style="right:-0.90px;top:293.43px;font-size:7.95px;line-height:7.95px;color:#3a3a3a;font-weight:normal;transform:scaleY(1.25);transform-origin:0 6.730px;">19 523,00</div>
<div class="t" style="right:778.70px;top:303.81px;font-size:7.95px;line-height:7.95px;color:#3a3a3a;font-weight:normal;transform:scaleY(1.25);transform-origin:0 6.730px;">9</div>
<div class="t" style="left:72.40px;top:303.81px;font-size:7.95px;line-height:7.95px;color:#3a3a3a;font-weight:normal;transform:scaleY(1.25);transform-origin:0 6.730px;">Кредитный Банк Москвы ОАО</div>
<div class="t" style="left:210.80px;top:303.81px;font-size:7.95px;line-height:7.95px;color:#3a3a3a;font-weight:normal;transform:scaleY(1.25);transform-origin:0 6.730px;">Бронешлем Коплак-3</div>
<div class="t" style="left:366.50px;top:303.81px;font-size:7.95px;line-height:7.95px;color:#3a3a3a;font-weight:normal;transform:scaleY(1.25);transform-origin:0 6.730px;">000000008</div>
<div class="t" style="right:351.80px;top:303.81px;font-size:7.95px;line-height:7.95px;color:#3a3a3a;font-weight:normal;transform:scaleY(1.25);transform-origin:0 6.730px;">1,000</div>
<div class="t" style="right:303.40px;top:303.81px;font-size:7.95px;line-height:7.95px;color:#3a3a3a;font-weight:normal;transform:scaleY(1.25);transform-origin:0 6.730px;">4 500,00</div>
<div class="t" style="right:60.70px;top:303.81px;font-size:7.95px;line-height:7.95px;color:#3a3a3a;font-weight:normal;transform:scaleY(1.25);transform-origin:0 6.730px;">1,000</div>
<div class="t" style="right:-0.90px;top:303.81px;font-size:7.95px;line-height:7.95px;color:#3a3a3a;font-weight:normal;transform:scaleY(1.25);transform-origin:0 6.730px;">4 500,00</div>
<div class="t" style="right:778.70px;top:314.19px;font-size:7.95px;line-height:7.95px;color:#3a3a3a;font-weight:normal;transform:scaleY(1.25);transform-origin:0 6.730px;">10</div>
<div class="t" style="left:72.40px;top:314.19px;font-size:7.95px;line-height:7.95px;color:#3a3a3a;font-weight:normal;transform:scaleY(1.25);transform-origin:0 6.730px;">Кредитный Банк Москвы ОАО</div>
<div class="t" style="left:210.80px;top:314.19px;font-size:7.95px;line-height:7.95px;color:#3a3a3a;font-weight:normal;transform:scaleY(1.25);transform-origin:0 6.730px;">Бронежилет Модуль-С /120-127-пс</div>
<div class="t" style="left:366.50px;top:314.19px;font-size:7.95px;line-height:7.95px;color:#3a3a3a;font-weight:normal;transform:scaleY(1.25);transform-origin:0 6.730px;">000000009</div>
<div class="t" style="right:351.80px;top:314.19px;font-size:7.95px;line-height:7.95px;color:#3a3a3a;font-weight:normal;transform:scaleY(1.25);transform-origin:0 6.730px;">1,000</div>
<div class="t" style="right:303.40px;top:314.19px;font-size:7.95px;line-height:7.95px;color:#3a3a3a;font-weight:normal;transform:scaleY(1.25);transform-origin:0 6.730px;">19 523,00</div>
<div class="t" style="right:60.70px;top:314.19px;font-size:7.95px;line-height:7.95px;color:#3a3a3a;font-weight:normal;transform:scaleY(1.25);transform-origin:0 6.730px;">1,000</div>
<div class="t" style="right:-0.90px;top:314.19px;font-size:7.95px;line-height:7.95px;color:#3a3a3a;font-weight:normal;transform:scaleY(1.25);transform-origin:0 6.730px;">19 523,00</div>
<div class="t" style="right:778.70px;top:324.57px;font-size:7.95px;line-height:7.95px;color:#3a3a3a;font-weight:normal;transform:scaleY(1.25);transform-origin:0 6.730px;">11</div>
<div class="t" style="left:72.40px;top:324.57px;font-size:7.95px;line-height:7.95px;color:#3a3a3a;font-weight:normal;transform:scaleY(1.25);transform-origin:0 6.730px;">Кредитный Банк Москвы ОАО</div>
<div class="t" style="left:210.80px;top:324.57px;font-size:7.95px;line-height:7.95px;color:#3a3a3a;font-weight:normal;transform:scaleY(1.25);transform-origin:0 6.730px;">Бронешлем Коплак-3</div>
<div class="t" style="left:366.50px;top:324.57px;font-size:7.95px;line-height:7.95px;color:#3a3a3a;font-weight:normal;transform:scaleY(1.25);transform-origin:0 6.730px;">000000010</div>
<div class="t" style="right:351.80px;top:324.57px;font-size:7.95px;line-height:7.95px;color:#3a3a3a;font-weight:normal;transform:scaleY(1.25);transform-origin:0 6.730px;">1,000</div>
<div class="t" style="right:303.40px;top:324.57px;font-size:7.95px;line-height:7.95px;color:#3a3a3a;font-weight:normal;transform:scaleY(1.25);transform-origin:0 6.730px;">4 500,00</div>
<div class="t" style="right:60.70px;top:324.57px;font-size:7.95px;line-height:7.95px;color:#3a3a3a;font-weight:normal;transform:scaleY(1.25);transform-origin:0 6.730px;">1,000</div>
<div class="t" style="right:-0.90px;top:324.57px;font-size:7.95px;line-height:7.95px;color:#3a3a3a;font-weight:normal;transform:scaleY(1.25);transform-origin:0 6.730px;">4 500,00</div>
<div class="t" style="right:778.70px;top:334.95px;font-size:7.95px;line-height:7.95px;color:#3a3a3a;font-weight:normal;transform:scaleY(1.25);transform-origin:0 6.730px;">12</div>
<div class="t" style="left:72.40px;top:334.95px;font-size:7.95px;line-height:7.95px;color:#3a3a3a;font-weight:normal;transform:scaleY(1.25);transform-origin:0 6.730px;">Кредитный Банк Москвы ОАО</div>
<div class="t" style="left:210.80px;top:334.95px;font-size:7.95px;line-height:7.95px;color:#3a3a3a;font-weight:normal;transform:scaleY(1.25);transform-origin:0 6.730px;">Бронежилет Модуль-С /120-127-пс</div>
<div class="t" style="left:366.50px;top:334.95px;font-size:7.95px;line-height:7.95px;color:#3a3a3a;font-weight:normal;transform:scaleY(1.25);transform-origin:0 6.730px;">000000011</div>
<div class="t" style="right:351.80px;top:334.95px;font-size:7.95px;line-height:7.95px;color:#3a3a3a;font-weight:normal;transform:scaleY(1.25);transform-origin:0 6.730px;">1,000</div>
<div class="t" style="right:303.40px;top:334.95px;font-size:7.95px;line-height:7.95px;color:#3a3a3a;font-weight:normal;transform:scaleY(1.25);transform-origin:0 6.730px;">19 523,00</div>
<div class="t" style="right:60.70px;top:334.95px;font-size:7.95px;line-height:7.95px;color:#3a3a3a;font-weight:normal;transform:scaleY(1.25);transform-origin:0 6.730px;">1,000</div>
<div class="t" style="right:-0.90px;top:334.95px;font-size:7.95px;line-height:7.95px;color:#3a3a3a;font-weight:normal;transform:scaleY(1.25);transform-origin:0 6.730px;">19 523,00</div>
<div class="t" style="right:778.70px;top:345.33px;font-size:7.95px;line-height:7.95px;color:#3a3a3a;font-weight:normal;transform:scaleY(1.25);transform-origin:0 6.730px;">13</div>
<div class="t" style="left:72.40px;top:345.33px;font-size:7.95px;line-height:7.95px;color:#3a3a3a;font-weight:normal;transform:scaleY(1.25);transform-origin:0 6.730px;">Кредитный Банк Москвы ОАО</div>
<div class="t" style="left:210.80px;top:345.33px;font-size:7.95px;line-height:7.95px;color:#3a3a3a;font-weight:normal;transform:scaleY(1.25);transform-origin:0 6.730px;">Бронешлем Коплак-3</div>
<div class="t" style="left:366.50px;top:345.33px;font-size:7.95px;line-height:7.95px;color:#3a3a3a;font-weight:normal;transform:scaleY(1.25);transform-origin:0 6.730px;">000000012</div>
<div class="t" style="right:351.80px;top:345.33px;font-size:7.95px;line-height:7.95px;color:#3a3a3a;font-weight:normal;transform:scaleY(1.25);transform-origin:0 6.730px;">1,000</div>
<div class="t" style="right:303.40px;top:345.33px;font-size:7.95px;line-height:7.95px;color:#3a3a3a;font-weight:normal;transform:scaleY(1.25);transform-origin:0 6.730px;">4 500,00</div>
<div class="t" style="right:60.70px;top:345.33px;font-size:7.95px;line-height:7.95px;color:#3a3a3a;font-weight:normal;transform:scaleY(1.25);transform-origin:0 6.730px;">1,000</div>
<div class="t" style="right:-0.90px;top:345.33px;font-size:7.95px;line-height:7.95px;color:#3a3a3a;font-weight:normal;transform:scaleY(1.25);transform-origin:0 6.730px;">4 500,00</div>
<div class="t" style="right:778.70px;top:355.71px;font-size:7.95px;line-height:7.95px;color:#3a3a3a;font-weight:normal;transform:scaleY(1.25);transform-origin:0 6.730px;">14</div>
<div class="t" style="left:72.40px;top:355.71px;font-size:7.95px;line-height:7.95px;color:#3a3a3a;font-weight:normal;transform:scaleY(1.25);transform-origin:0 6.730px;">Кредитный Банк Москвы ОАО</div>
<div class="t" style="left:210.80px;top:355.71px;font-size:7.95px;line-height:7.95px;color:#3a3a3a;font-weight:normal;transform:scaleY(1.25);transform-origin:0 6.730px;">Бронежилет Модуль-С /120-127-пс</div>
<div class="t" style="left:366.50px;top:355.71px;font-size:7.95px;line-height:7.95px;color:#3a3a3a;font-weight:normal;transform:scaleY(1.25);transform-origin:0 6.730px;">000000013</div>
<div class="t" style="right:351.80px;top:355.71px;font-size:7.95px;line-height:7.95px;color:#3a3a3a;font-weight:normal;transform:scaleY(1.25);transform-origin:0 6.730px;">1,000</div>
<div class="t" style="right:303.40px;top:355.71px;font-size:7.95px;line-height:7.95px;color:#3a3a3a;font-weight:normal;transform:scaleY(1.25);transform-origin:0 6.730px;">19 523,00</div>
<div class="t" style="right:60.70px;top:355.71px;font-size:7.95px;line-height:7.95px;color:#3a3a3a;font-weight:normal;transform:scaleY(1.25);transform-origin:0 6.730px;">1,000</div>
<div class="t" style="right:-0.90px;top:355.71px;font-size:7.95px;line-height:7.95px;color:#3a3a3a;font-weight:normal;transform:scaleY(1.25);transform-origin:0 6.730px;">19 523,00</div>
<div class="t" style="right:778.70px;top:366.09px;font-size:7.95px;line-height:7.95px;color:#3a3a3a;font-weight:normal;transform:scaleY(1.25);transform-origin:0 6.730px;">15</div>
<div class="t" style="left:72.40px;top:366.09px;font-size:7.95px;line-height:7.95px;color:#3a3a3a;font-weight:normal;transform:scaleY(1.25);transform-origin:0 6.730px;">Кредитный Банк Москвы ОАО</div>
<div class="t" style="left:210.80px;top:366.09px;font-size:7.95px;line-height:7.95px;color:#3a3a3a;font-weight:normal;transform:scaleY(1.25);transform-origin:0 6.730px;">Бронешлем Коплак-3</div>
<div class="t" style="left:366.50px;top:366.09px;font-size:7.95px;line-height:7.95px;color:#3a3a3a;font-weight:normal;transform:scaleY(1.25);transform-origin:0 6.730px;">000000014</div>
<div class="t" style="right:351.80px;top:366.09px;font-size:7.95px;line-height:7.95px;color:#3a3a3a;font-weight:normal;transform:scaleY(1.25);transform-origin:0 6.730px;">1,000</div>
<div class="t" style="right:303.40px;top:366.09px;font-size:7.95px;line-height:7.95px;color:#3a3a3a;font-weight:normal;transform:scaleY(1.25);transform-origin:0 6.730px;">4 500,00</div>
<div class="t" style="right:60.70px;top:366.09px;font-size:7.95px;line-height:7.95px;color:#3a3a3a;font-weight:normal;transform:scaleY(1.25);transform-origin:0 6.730px;">1,000</div>
<div class="t" style="right:-0.90px;top:366.09px;font-size:7.95px;line-height:7.95px;color:#3a3a3a;font-weight:normal;transform:scaleY(1.25);transform-origin:0 6.730px;">4 500,00</div>
<div class="t" style="right:778.70px;top:376.47px;font-size:7.95px;line-height:7.95px;color:#3a3a3a;font-weight:normal;transform:scaleY(1.25);transform-origin:0 6.730px;">16</div>
<div class="t" style="left:72.40px;top:376.47px;font-size:7.95px;line-height:7.95px;color:#3a3a3a;font-weight:normal;transform:scaleY(1.25);transform-origin:0 6.730px;">Кредитный Банк Москвы ОАО</div>
<div class="t" style="left:210.80px;top:376.47px;font-size:7.95px;line-height:7.95px;color:#3a3a3a;font-weight:normal;transform:scaleY(1.25);transform-origin:0 6.730px;">Кулер Ecotronic H1-LF с холодильником</div>
<div class="t" style="left:366.50px;top:376.47px;font-size:7.95px;line-height:7.95px;color:#3a3a3a;font-weight:normal;transform:scaleY(1.25);transform-origin:0 6.730px;">000000022</div>
<div class="t" style="right:351.80px;top:376.47px;font-size:7.95px;line-height:7.95px;color:#3a3a3a;font-weight:normal;transform:scaleY(1.25);transform-origin:0 6.730px;">1,000</div>
<div class="t" style="right:303.40px;top:376.47px;font-size:7.95px;line-height:7.95px;color:#3a3a3a;font-weight:normal;transform:scaleY(1.25);transform-origin:0 6.730px;">8 200,00</div>
<div class="t" style="right:60.70px;top:376.47px;font-size:7.95px;line-height:7.95px;color:#3a3a3a;font-weight:normal;transform:scaleY(1.25);transform-origin:0 6.730px;">1,000</div>
<div class="t" style="right:-0.90px;top:376.47px;font-size:7.95px;line-height:7.95px;color:#3a3a3a;font-weight:normal;transform:scaleY(1.25);transform-origin:0 6.730px;">8 200,00</div>
<div class="t" style="right:778.70px;top:386.85px;font-size:7.95px;line-height:7.95px;color:#3a3a3a;font-weight:normal;transform:scaleY(1.25);transform-origin:0 6.730px;">17</div>
<div class="t" style="left:72.40px;top:386.85px;font-size:7.95px;line-height:7.95px;color:#3a3a3a;font-weight:normal;transform:scaleY(1.25);transform-origin:0 6.730px;">Кредитный Банк Москвы ОАО</div>
<div class="t" style="left:210.80px;top:386.85px;font-size:7.95px;line-height:7.95px;color:#3a3a3a;font-weight:normal;transform:scaleY(1.25);transform-origin:0 6.730px;">Бронешлем Коплак-3</div>
<div class="t" style="left:366.50px;top:386.85px;font-size:7.95px;line-height:7.95px;color:#3a3a3a;font-weight:normal;transform:scaleY(1.25);transform-origin:0 6.730px;">000000028</div>
<div class="t" style="right:351.80px;top:386.85px;font-size:7.95px;line-height:7.95px;color:#3a3a3a;font-weight:normal;transform:scaleY(1.25);transform-origin:0 6.730px;">1,000</div>
<div class="t" style="right:303.40px;top:386.85px;font-size:7.95px;line-height:7.95px;color:#3a3a3a;font-weight:normal;transform:scaleY(1.25);transform-origin:0 6.730px;">4 500,00</div>
<div class="t" style="right:60.70px;top:386.85px;font-size:7.95px;line-height:7.95px;color:#3a3a3a;font-weight:normal;transform:scaleY(1.25);transform-origin:0 6.730px;">1,000</div>
<div class="t" style="right:-0.90px;top:386.85px;font-size:7.95px;line-height:7.95px;color:#3a3a3a;font-weight:normal;transform:scaleY(1.25);transform-origin:0 6.730px;">4 500,00</div>
<div class="t" style="left:33.80px;top:397.23px;font-size:7.95px;line-height:7.95px;color:#1d554c;font-weight:normal;transform:scaleY(1.25);transform-origin:0 6.730px;">Мухин Андрей Сергеевич</div>
<div class="t" style="right:351.80px;top:397.23px;font-size:7.95px;line-height:7.95px;color:#1d554c;font-weight:normal;transform:scaleY(1.25);transform-origin:0 6.730px;">1,000</div>
<div class="t" style="right:303.40px;top:397.23px;font-size:7.95px;line-height:7.95px;color:#1d554c;font-weight:normal;transform:scaleY(1.25);transform-origin:0 6.730px;">1 690,00</div>
<div class="t" style="right:60.70px;top:397.23px;font-size:7.95px;line-height:7.95px;color:#1d554c;font-weight:normal;transform:scaleY(1.25);transform-origin:0 6.730px;">1,000</div>
<div class="t" style="right:-0.90px;top:397.23px;font-size:7.95px;line-height:7.95px;color:#1d554c;font-weight:normal;transform:scaleY(1.25);transform-origin:0 6.730px;">1 690,00</div>
<div class="t" style="left:43.00px;top:407.61px;font-size:7.95px;line-height:7.95px;color:#3a3a3a;font-weight:normal;transform:scaleY(1.25);transform-origin:0 6.730px;">Отдел инкассации</div>
<div class="t" style="right:351.80px;top:407.61px;font-size:7.95px;line-height:7.95px;color:#3a3a3a;font-weight:normal;transform:scaleY(1.25);transform-origin:0 6.730px;">1,000</div>
<div class="t" style="right:303.40px;top:407.61px;font-size:7.95px;line-height:7.95px;color:#3a3a3a;font-weight:normal;transform:scaleY(1.25);transform-origin:0 6.730px;">1 690,00</div>
<div class="t" style="right:60.70px;top:407.61px;font-size:7.95px;line-height:7.95px;color:#3a3a3a;font-weight:normal;transform:scaleY(1.25);transform-origin:0 6.730px;">1,000</div>
<div class="t" style="right:-0.90px;top:407.61px;font-size:7.95px;line-height:7.95px;color:#3a3a3a;font-weight:normal;transform:scaleY(1.25);transform-origin:0 6.730px;">1 690,00</div>
<div class="t" style="right:778.70px;top:417.99px;font-size:7.95px;line-height:7.95px;color:#3a3a3a;font-weight:normal;transform:scaleY(1.25);transform-origin:0 6.730px;">18</div>
<div class="t" style="left:72.40px;top:417.99px;font-size:7.95px;line-height:7.95px;color:#3a3a3a;font-weight:normal;transform:scaleY(1.25);transform-origin:0 6.730px;">Кредитный Банк Москвы ОАО</div>
<div class="t" style="left:210.80px;top:417.99px;font-size:7.95px;line-height:7.95px;color:#3a3a3a;font-weight:normal;transform:scaleY(1.25);transform-origin:0 6.730px;">Камера для компьютера Logitech C525</div>
<div class="t" style="left:366.50px;top:417.99px;font-size:7.95px;line-height:7.95px;color:#3a3a3a;font-weight:normal;transform:scaleY(1.25);transform-origin:0 6.730px;">000000019</div>
<div class="t" style="right:351.80px;top:417.99px;font-size:7.95px;line-height:7.95px;color:#3a3a3a;font-weight:normal;transform:scaleY(1.25);transform-origin:0 6.730px;">1,000</div>
<div class="t" style="right:303.40px;top:417.99px;font-size:7.95px;line-height:7.95px;color:#3a3a3a;font-weight:normal;transform:scaleY(1.25);transform-origin:0 6.730px;">1 690,00</div>
<div class="t" style="right:60.70px;top:417.99px;font-size:7.95px;line-height:7.95px;color:#3a3a3a;font-weight:normal;transform:scaleY(1.25);transform-origin:0 6.730px;">1,000</div>
<div class="t" style="right:-0.90px;top:417.99px;font-size:7.95px;line-height:7.95px;color:#3a3a3a;font-weight:normal;transform:scaleY(1.25);transform-origin:0 6.730px;">1 690,00</div>
<div class="r" style="left:4.80px;top:165.70px;width:27.20px;height:1.00px;background:#afb4ab"></div>
<div class="r" style="left:31.50px;top:84.40px;width:1.00px;height:342.60px;background:#c4c4c4"></div>
<div class="r" style="left:18.70px;top:185.17px;width:1.00px;height:12.57px;background:#bdbdbd"></div>
<div class="r" style="left:19.20px;top:197.24px;width:12.80px;height:1.00px;background:#bdbdbd"></div>
<div class="r" style="left:15.80px;top:178.37px;width:6.90px;height:6.90px;border:1px solid #c8c8c8;border-radius:1.8px;background:#fff;box-sizing:border-box"></div>
<div class="r" style="left:17.20px;top:181.47px;width:4.10px;height:0.80px;background:#6a6a6a"></div>
<div class="r" style="left:18.70px;top:205.93px;width:1.00px;height:33.33px;background:#bdbdbd"></div>
<div class="r" style="left:19.20px;top:238.76px;width:12.80px;height:1.00px;background:#bdbdbd"></div>
<div class="r" style="left:15.80px;top:199.13px;width:6.90px;height:6.90px;border:1px solid #c8c8c8;border-radius:1.8px;background:#fff;box-sizing:border-box"></div>
<div class="r" style="left:17.20px;top:202.23px;width:4.10px;height:0.80px;background:#6a6a6a"></div>
<div class="r" style="left:18.70px;top:257.83px;width:1.00px;height:137.13px;background:#bdbdbd"></div>
<div class="r" style="left:19.20px;top:394.46px;width:12.80px;height:1.00px;background:#bdbdbd"></div>
<div class="r" style="left:15.80px;top:251.03px;width:6.90px;height:6.90px;border:1px solid #c8c8c8;border-radius:1.8px;background:#fff;box-sizing:border-box"></div>
<div class="r" style="left:17.20px;top:254.13px;width:4.10px;height:0.80px;background:#6a6a6a"></div>
<div class="r" style="left:18.70px;top:413.53px;width:1.00px;height:12.57px;background:#bdbdbd"></div>
<div class="r" style="left:19.20px;top:425.60px;width:12.80px;height:1.00px;background:#bdbdbd"></div>
<div class="r" style="left:15.80px;top:406.73px;width:6.90px;height:6.90px;border:1px solid #c8c8c8;border-radius:1.8px;background:#fff;box-sizing:border-box"></div>
<div class="r" style="left:17.20px;top:409.83px;width:4.10px;height:0.80px;background:#6a6a6a"></div>
<div class="r" style="left:10.10px;top:174.79px;width:1.00px;height:64.47px;background:#bdbdbd"></div>
<div class="r" style="left:10.60px;top:238.76px;width:21.40px;height:1.00px;background:#bdbdbd"></div>
<div class="r" style="left:7.20px;top:167.99px;width:6.90px;height:6.90px;border:1px solid #c8c8c8;border-radius:1.8px;background:#fff;box-sizing:border-box"></div>
<div class="r" style="left:8.60px;top:171.09px;width:4.10px;height:0.80px;background:#6a6a6a"></div>
<div class="r" style="left:10.10px;top:247.45px;width:1.00px;height:147.51px;background:#bdbdbd"></div>
<div class="r" style="left:10.60px;top:394.46px;width:21.40px;height:1.00px;background:#bdbdbd"></div>
<div class="r" style="left:7.20px;top:240.65px;width:6.90px;height:6.90px;border:1px solid #c8c8c8;border-radius:1.8px;background:#fff;box-sizing:border-box"></div>
<div class="r" style="left:8.60px;top:243.75px;width:4.10px;height:0.80px;background:#6a6a6a"></div>
<div class="r" style="left:10.10px;top:403.15px;width:1.00px;height:22.95px;background:#bdbdbd"></div>
<div class="r" style="left:10.60px;top:425.60px;width:21.40px;height:1.00px;background:#bdbdbd"></div>
<div class="r" style="left:7.20px;top:396.35px;width:6.90px;height:6.90px;border:1px solid #c8c8c8;border-radius:1.8px;background:#fff;box-sizing:border-box"></div>
<div class="r" style="left:8.60px;top:399.45px;width:4.10px;height:0.80px;background:#6a6a6a"></div>
</body></html>
